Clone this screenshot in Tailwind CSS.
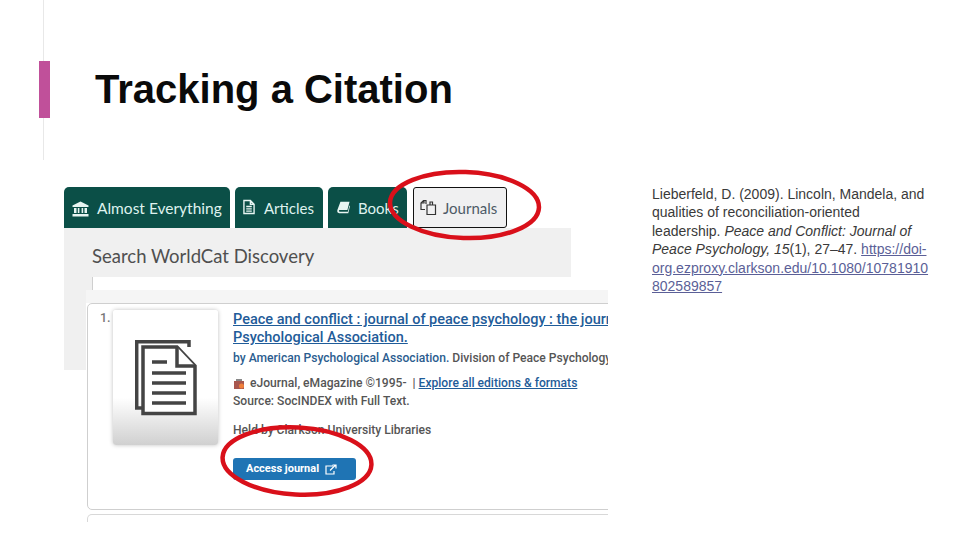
<!DOCTYPE html>
<html lang="en">
<head>
<meta charset="utf-8">
<script src="https://cdn.jsdelivr.net/npm/@tailwindcss/browser@4"></script>
<title>Tracking a Citation</title>
</head>
<body class="bg-white">
<div class="relative w-[960px] h-[540px] overflow-hidden bg-white font-['Liberation_Sans',sans-serif]">
  <!-- faint rule behind the accent bar -->
  <div class="absolute left-[43px] top-0 w-px h-[160px] bg-[#e8e8e8]"></div>

  <header class="relative flex items-start h-[187px] pl-[39px] pt-[61px]">
    <div class="w-[11px] h-[57px] bg-[#c0509a]"></div>
    <h1 class="ml-[45px] text-[40px] leading-[56px] font-bold text-[#0a0a0a]">Tracking a Citation</h1>
  </header>

  <main class="flex pl-[64px]">
    <section class="relative w-[544px] h-[335px] overflow-hidden font-['Lato',sans-serif]">
      <!-- tabs -->
      <div class="flex h-[41px] text-[15px] text-[#dff2ee]">
        <div class="flex items-center w-[166px] pl-[8px] pt-[2px] gap-[8px] bg-[#0b4f47] rounded-t-[5px] text-[15.5px]">
          <svg width="17" height="16" viewBox="0 0 17 16" fill="#e8f5f2"><path d="M8.5 0.5 16.5 4.5V6H.5V4.5zM2 7h2.5v5H2zM5.8 7h1.6v5H5.8zM9.6 7h1.6v5H9.6zM12.5 7H15v5h-2.5zM.5 13h16v2.5H.5z"/></svg>
          <span>Almost Everything</span>
        </div>
        <div class="flex items-center w-[88px] ml-[5px] pl-[8px] pt-[2px] gap-[9px] bg-[#0b4f47] rounded-t-[5px]">
          <svg class="-mt-[3px]" width="12" height="16" viewBox="0 0 13 16" fill="none" stroke="#e8f5f2" stroke-width="1.5"><path d="M1 1h7l4 4v10H1zM8 1v4h4M3.5 7.5h6M3.5 10h6M3.5 12.5h6"/></svg>
          <span>Articles</span>
        </div>
        <div class="flex items-center w-[79px] ml-[5px] pl-[9px] pt-[2px] gap-[8px] bg-[#0b4f47] rounded-t-[5px]">
          <svg class="-mt-[3px]" width="13" height="13" viewBox="0 0 15 14" fill="#e8f5f2"><path d="M4 .5h10.500l-2.500 9.500H3c-1 0-1.200 1.800 0 1.800h9.500l1.800-7 .7.500-2 8.200H2.500C.5 13.500 0 12 .4 10z"/></svg>
          <span>Books</span>
        </div>
        <div class="flex items-center w-[94px] ml-[6px] pl-[6px] pt-[2px] gap-[6px] bg-[#f0f0f1] border border-[#111] rounded-[3px] text-[#4d5a66]">
          <svg class="-mt-[3px]" width="17" height="17" viewBox="0 0 17 17" fill="none" stroke="#333" stroke-width="1.2"><path d="M6 5V1.500H3.500L1 4v6.500h4M7 6h8.500v9.500H7zM1 4h3V1.500M10 6V3h2.500v3"/></svg>
          <span>Journals</span>
        </div>
      </div>

      <!-- search panel -->
      <div class="w-[507px] h-[49px] bg-[#f0f0f0] pl-[28px] pt-[15px] text-[18.5px] leading-[26px] text-[#4f4f4f]">Search WorldCat Discovery</div>
      <div class="flex h-[93px]">
        <div class="w-[22px] bg-[#f0f0f0]"></div>
        <div class="flex-1 bg-white">
          <div class="flex h-[13px]">
            <div class="w-[6px] bg-[#f0f0f0]"></div>
            <div class="flex-1 border-l border-[#cfcfcf]"></div>
          </div>
          <div class="h-[13px] bg-[#f5f5f5]"></div>
        </div>
      </div>

      <!-- result card, laid over the panel -->
      <article class="absolute left-[23px] top-[116px] w-[530px] h-[207px] flex bg-white border border-[#cfcfcf] rounded-[5px] font-['Roboto',sans-serif]">
        <span class="ml-[12px] mt-[5px] w-[13px] text-[12.5px] font-medium text-[#777]">1.</span>
        <div class="relative mt-[6px] w-[105px] h-[135px] rounded-[3px] bg-gradient-to-b from-white from-65% to-[#d0d0d0] shadow-[0_0_4px_rgba(0,0,0,0.25)]">
          <svg class="absolute left-[22px] top-[30px]" width="62" height="76" viewBox="0 0 62 76" fill="none" stroke="#444" stroke-width="3.5">
            <path d="M7 68H1.700V1.700H54V7"/>
            <path d="M8 7H42L60 26V73.500H8z" fill="#fff"/>
            <path d="M42 7V26H60" fill="#fff"/>
            <path d="M17 22H32M17 33H51M17 43H51M17 53H51M17 63H51"/>
          </svg>
        </div>
        <div class="ml-[15px] min-w-0 flex-1 overflow-hidden whitespace-nowrap text-[12.1px] text-[#555]">
          <div class="mt-[7px] text-[14.5px] leading-[18px] font-medium text-[#1f5c99] underline">Peace and conflict : journal of peace psychology : the journal of the<br>Psychological Association.</div>
          <div class="mt-[1px] leading-[20px] font-medium"><span class="text-[#2b5d8f]">by American Psychological Association.</span> Division of Peace Psychology</div>
          <div class="mt-[7px] flex items-center leading-[17px]">
            <svg class="mr-[5px]" width="12" height="12" viewBox="0 0 12 12"><rect x="1" y="3" width="10" height="8" fill="#a8574f"/><rect x="3" y="1" width="6" height="2" fill="#888"/><circle cx="8.500" cy="8" r="2.500" fill="#f0803c"/></svg>
            <span class="font-medium">eJournal, eMagazine ©1995-&nbsp; |&nbsp;</span><span class="font-medium text-[#1f5c99] underline">Explore all editions &amp; formats</span>
          </div>
          <div class="mt-[1px] leading-[17px] font-medium">Source: SocINDEX with Full Text.</div>
          <div class="mt-[12px] leading-[17px] font-medium">Held by Clarkson University Libraries</div>
          <div class="mt-[19px] flex items-center w-[123px] h-[22px] pl-[13px] gap-[6px] rounded-[3px] bg-[#1f74b4] text-[11px] font-bold text-white">
            <span>Access journal</span>
            <svg width="12" height="11" viewBox="0 0 12 11" fill="none" stroke="#fff" stroke-width="1.2"><path d="M8 2H1v8h8V7M5 6.500 10.500 1M7.500 1H11v3.500"/></svg>
          </div>
        </div>
      </article>
      <div class="absolute left-[23px] top-[327px] w-[530px] h-[8px] bg-white border-t border-x border-[#d8d8d8] rounded-t-[5px]"></div>
    </section>

    <p class="ml-[44px] -mt-[2px] w-[290px] whitespace-nowrap text-[14px] leading-[18.4px] text-[#3a3a3a]">
      Lieberfeld, D. (2009). Lincoln, Mandela, and<br>qualities of reconciliation-oriented<br>leadership. <i>Peace and Conflict: Journal of</i><br><i>Peace Psychology, 15</i>(1), 27–47. <span class="text-[#5b5f97] underline">https://doi-<br>org.ezproxy.clarkson.edu/10.1080/10781910<br>802589857</span>
    </p>
  </main>

  <!-- hand-drawn red circles over the screenshot -->
  <svg class="absolute inset-0 pointer-events-none" width="960" height="540" fill="none" stroke="#d9101a" stroke-width="4.5">
    <ellipse cx="464.5" cy="205" rx="74.5" ry="33" transform="rotate(2 464.5 205)"/>
    <ellipse cx="297" cy="461" rx="74.5" ry="33.5" transform="rotate(3 297 461)"/>
  </svg>
</div>
</body>
</html>
